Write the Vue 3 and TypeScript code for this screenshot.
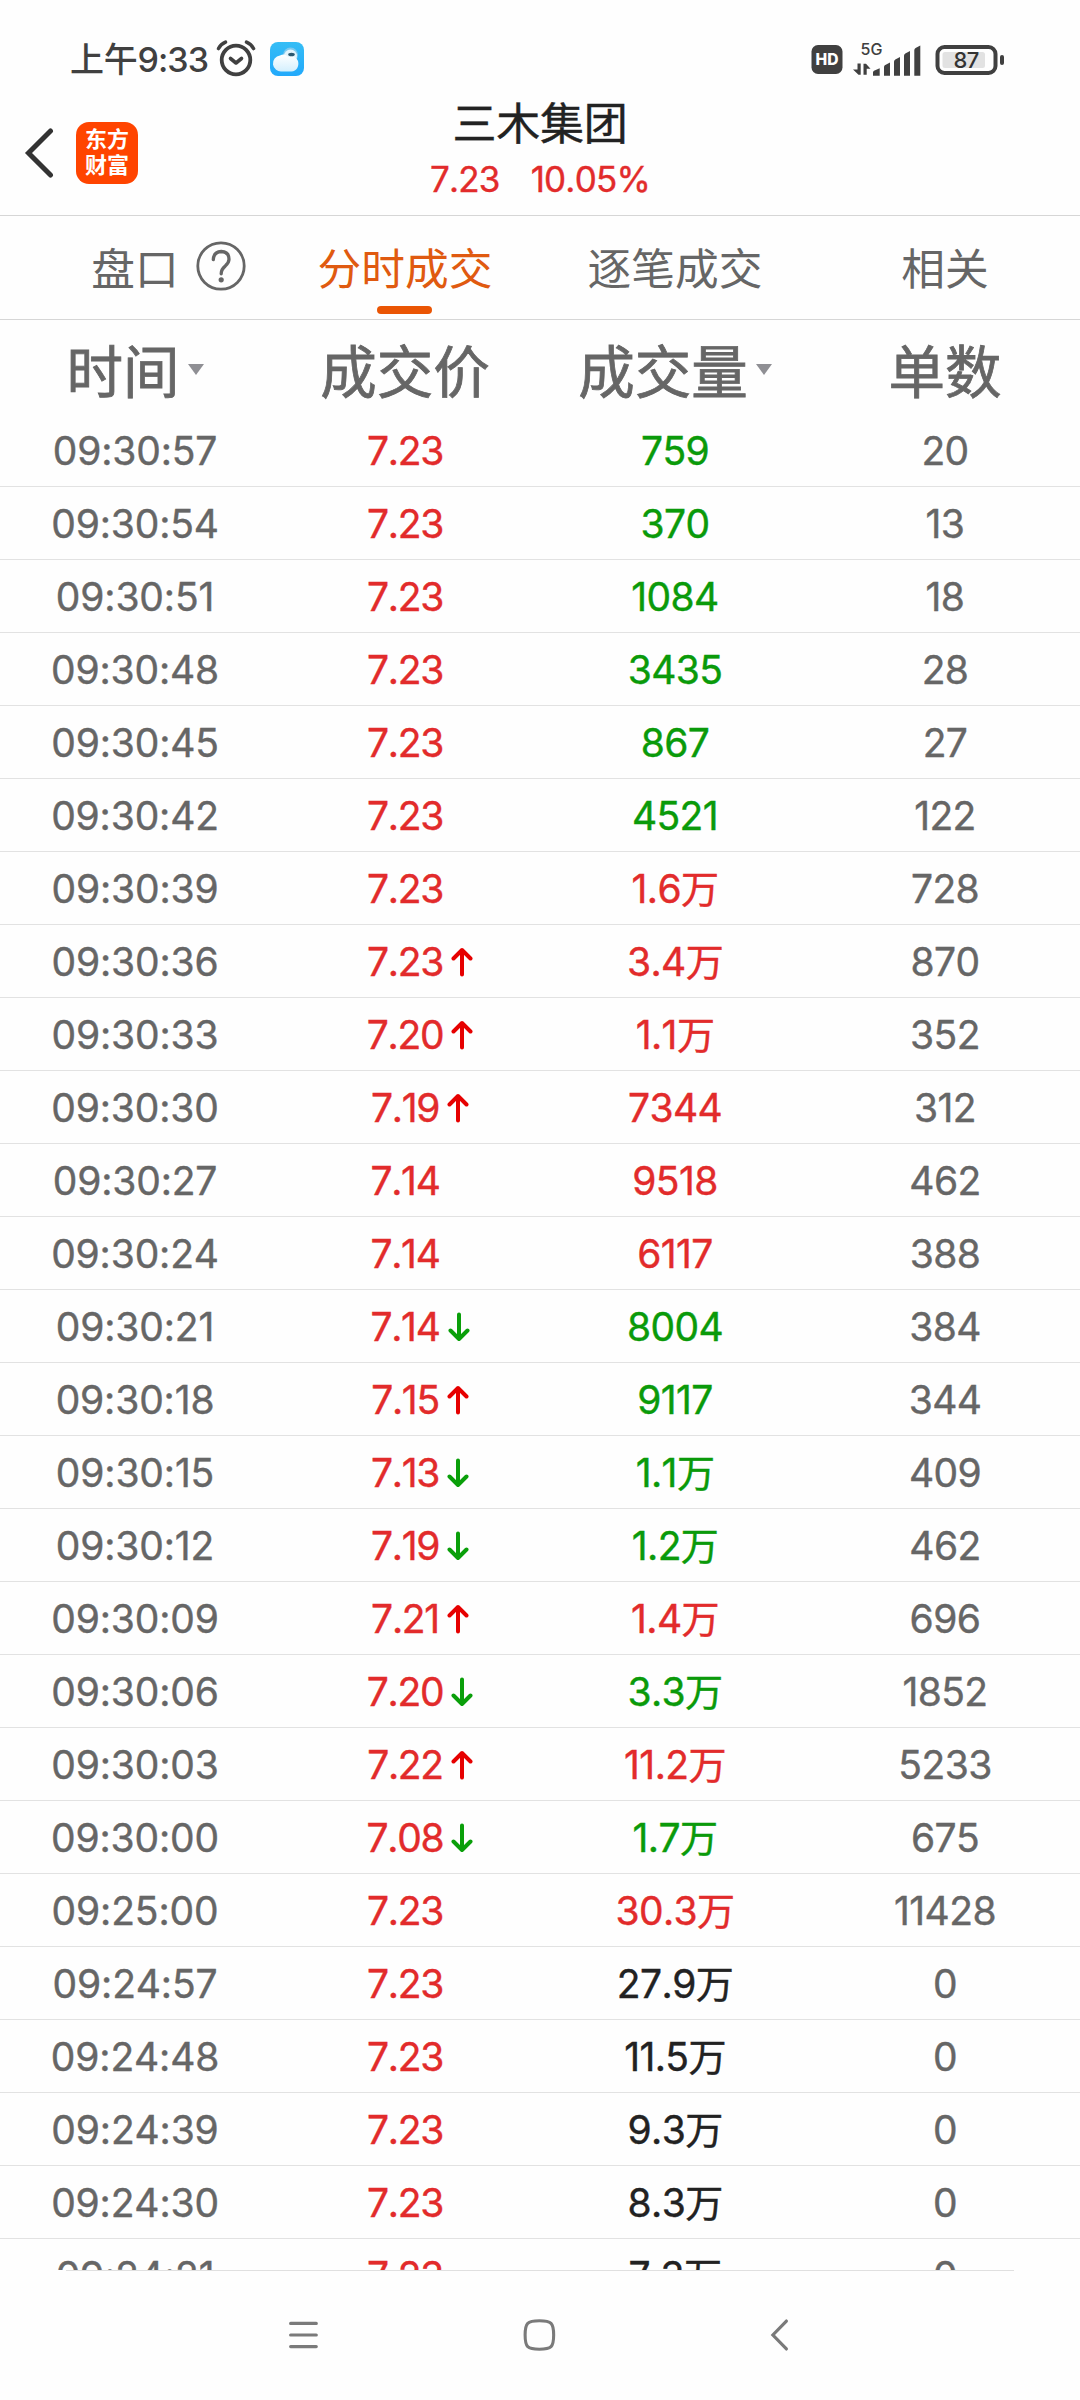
<script setup lang="ts">
type Tone = 'red' | 'green' | 'black'
type Trend = 'up' | 'down' | ''

interface Trade {
  time: string
  price: string
  trend: Trend
  volume: string
  unit: string
  tone: Tone
  orders: string
}

const t = (time: string, price: string, trend: Trend, volume: string, tone: Tone, orders: string): Trade => ({
  time,
  price,
  trend,
  volume: volume.replace('万', ''),
  unit: volume.endsWith('万') ? '万' : '',
  tone,
  orders,
})

const trades: Trade[] = [
  t('09:30:57', '7.23', '', '759', 'green', '20'),
  t('09:30:54', '7.23', '', '370', 'green', '13'),
  t('09:30:51', '7.23', '', '1084', 'green', '18'),
  t('09:30:48', '7.23', '', '3435', 'green', '28'),
  t('09:30:45', '7.23', '', '867', 'green', '27'),
  t('09:30:42', '7.23', '', '4521', 'green', '122'),
  t('09:30:39', '7.23', '', '1.6万', 'red', '728'),
  t('09:30:36', '7.23', 'up', '3.4万', 'red', '870'),
  t('09:30:33', '7.20', 'up', '1.1万', 'red', '352'),
  t('09:30:30', '7.19', 'up', '7344', 'red', '312'),
  t('09:30:27', '7.14', '', '9518', 'red', '462'),
  t('09:30:24', '7.14', '', '6117', 'red', '388'),
  t('09:30:21', '7.14', 'down', '8004', 'green', '384'),
  t('09:30:18', '7.15', 'up', '9117', 'green', '344'),
  t('09:30:15', '7.13', 'down', '1.1万', 'green', '409'),
  t('09:30:12', '7.19', 'down', '1.2万', 'green', '462'),
  t('09:30:09', '7.21', 'up', '1.4万', 'red', '696'),
  t('09:30:06', '7.20', 'down', '3.3万', 'green', '1852'),
  t('09:30:03', '7.22', 'up', '11.2万', 'red', '5233'),
  t('09:30:00', '7.08', 'down', '1.7万', 'green', '675'),
  t('09:25:00', '7.23', '', '30.3万', 'red', '11428'),
  t('09:24:57', '7.23', '', '27.9万', 'black', '0'),
  t('09:24:48', '7.23', '', '11.5万', 'black', '0'),
  t('09:24:39', '7.23', '', '9.3万', 'black', '0'),
  t('09:24:30', '7.23', '', '8.3万', 'black', '0'),
  t('09:24:21', '7.23', '', '7.3万', 'black', '0'),
]

const columns = [
  { label: '时间', sortable: true },
  { label: '成交价', sortable: false },
  { label: '成交量', sortable: true },
  { label: '单数', sortable: false },
]
</script>

<template>
  <div class="screen">
    <div class="status">
      <div class="status-left">
        <span class="clock"><span class="clock-cn">上午</span>9:33</span>
        <svg class="alarm" width="42" height="38" viewBox="0 0 42 38" fill="none" stroke="#404040" stroke-linecap="round">
          <circle cx="21" cy="21" r="14.3" stroke-width="3.8" />
          <path d="M15.5 19.5l5.500 4.500 5.500-4.500" stroke-width="3.6" stroke-linejoin="round" />
          <path d="M3.500 9.500q2.500-4.500 7-6.300M38.500 9.500q-2.500-4.500-7-6.300" stroke-width="3.600" />
        </svg>
        <svg class="weather" width="34" height="34" viewBox="0 0 34 34">
          <defs>
            <linearGradient id="sky" x1="0" y1="0" x2="0" y2="1">
              <stop offset="0" stop-color="#35bdf5" />
              <stop offset="1" stop-color="#22a9fb" />
            </linearGradient>
            <linearGradient id="cloud" x1="0" y1="0" x2="0" y2="1">
              <stop offset="0" stop-color="#ffffff" />
              <stop offset="1" stop-color="#d3effd" />
            </linearGradient>
          </defs>
          <rect width="34" height="34" rx="8" fill="url(#sky)" />
          <circle cx="20.500" cy="13" r="7.500" fill="#7cc9ee" />
          <circle cx="20.500" cy="14" r="6.500" fill="#e2f4fc" />
          <path d="M12 29.500a8 8 0 0 1-2-16 7 7 0 0 1 8.500 1.500 7 7 0 0 1 9.500 4c1.500 5-1.500 10.500-6.500 10.500z" fill="url(#cloud)" />
          <ellipse cx="21.500" cy="12.500" rx="3.300" ry="1.800" fill="#2b5870" />
        </svg>
      </div>
      <svg class="status-right" width="194" height="40" viewBox="0 -4 194 40">
        <rect x="0.500" y="4" width="31" height="29" rx="6.500" fill="#404040" />
        <text x="16" y="23.800" text-anchor="middle" class="hd" textLength="23" lengthAdjust="spacingAndGlyphs">HD</text>
        <text x="60.500" y="13.500" text-anchor="middle" class="net">5G</text>
        <g fill="#404040">
          <path d="M46.500 22.500h3.200v11.200h-2.200l-5.500-5.200h4.500zM52.500 33.700h3.200v-6h3.800l-4.500-5h-2.500z" />
          <path d="M62 34.700v-3.500q0-1 1-1.500l5.700-2.500v7.500zM73 34.700v-8.700q0-1.500 1.300-2l4.700-2.500v13.200zM83 34.700v-14q0-1.500 1.300-2.200l4.700-2.500v18.700zM93 34.700v-20q0-1.500 1.300-2.200l4.700-2.500v24.700zM103.300 34.700v-25.500q0-1.500 1.300-2.200l4.700-2.500v30.200z" />
        </g>
        <rect x="126.500" y="6" width="58" height="26" rx="7" fill="none" stroke="#404040" stroke-width="4" />
        <rect x="131.500" y="11" width="42.500" height="16" rx="2.500" fill="#e2e2e2" />
        <text x="155" y="27.300" text-anchor="middle" class="batt">87</text>
        <rect x="189" y="14" width="4" height="10" rx="2" fill="#404040" />
      </svg>
    </div>

    <header class="header">
      <div class="header-left">
        <svg width="30" height="52" viewBox="0 0 30 52" fill="none" stroke="#333" stroke-width="5" stroke-linecap="round" stroke-linejoin="miter">
          <path d="M26.500 4L4.500 26l22 22" />
        </svg>
        <div class="logo"><span>东方</span><span>财富</span></div>
      </div>
      <div class="header-mid">
        <h1>三木集团</h1>
        <div class="quote"><span>7.23</span><span>10.05%</span></div>
      </div>
      <div></div>
    </header>

    <nav class="tabs">
      <div class="tab">
        <span class="tab-text">盘口
          <svg class="help" width="50" height="50" viewBox="0 0 50 50" fill="none" stroke="#666">
            <circle cx="25" cy="25" r="23.200" stroke-width="2.800" />
            <path d="M17.300 18.700q0.500-8 7.900-8.200 7.800 0.300 7.800 7.800 0 3.500-3.800 6.800-4 3.200-4 7.700" stroke-width="3.300" stroke-linecap="round" />
            <circle cx="25.200" cy="38.800" r="2.600" fill="#666" stroke="none" />
          </svg>
        </span>
      </div>
      <div class="tab active"><span class="tab-text">分时成交</span></div>
      <div class="tab"><span class="tab-text">逐笔成交</span></div>
      <div class="tab"><span class="tab-text">相关</span></div>
    </nav>

    <div class="cols">
      <div v-for="c in columns" :key="c.label" class="col">
        <span>{{ c.label }}</span>
        <i v-if="c.sortable" class="caret"></i>
      </div>
    </div>

    <main class="list">
      <div v-for="r in trades" :key="r.time" class="row">
        <div class="cell time">{{ r.time }}</div>
        <div class="cell red">
          <span class="price">{{ r.price }}
            <svg v-if="r.trend" class="arrow" :class="r.trend" width="22" height="30" viewBox="0 0 22 30" fill="none" stroke-width="4" stroke-linecap="round" stroke-linejoin="round">
              <path d="M11 27.500V3M2.500 11.500L11 3l8.500 8.500" />
            </svg>
          </span>
        </div>
        <div class="cell" :class="r.tone">{{ r.volume }}<span v-if="r.unit" class="unit">{{ r.unit }}</span></div>
        <div class="cell orders">{{ r.orders }}</div>
      </div>
    </main>

    <footer class="sysnav">
      <svg width="30" height="32" viewBox="0 0 30 32" stroke="#7a7a7a" stroke-width="3.300" stroke-linecap="round">
        <path d="M1.700 4h26.600M1.700 16h26.600M1.700 28h26.600" />
      </svg>
      <svg class="home" width="34" height="34" viewBox="0 0 34 34" fill="none" stroke="#7a7a7a" stroke-width="3.200">
        <path d="M17 2.200c12.500 0 14.800 2.300 14.800 14.800S29.500 31.800 17 31.800 2.200 29.500 2.200 17 4.500 2.200 17 2.200z" />
      </svg>
      <svg width="20" height="34" viewBox="0 0 20 34" fill="none" stroke="#7a7a7a" stroke-width="3.300" stroke-linecap="round">
        <path d="M17 2.500L3 17l14 14.500" />
      </svg>
    </footer>
  </div>
</template>

<style>
body {
  background: #fff;
}
</style>

<style scoped>
.screen {
  width: 1080px;
  height: 2400px;
  display: flex;
  flex-direction: column;
  overflow: hidden;
  background: #fefefe;
  font-family: Inter, 'Noto Sans CJK SC', sans-serif;
  font-kerning: none;
  color: #666;
}
.status {
  box-sizing: border-box;
  flex: none;
  height: 84px;
  padding: 34px 75px 0 70px;
  display: flex;
  align-items: center;
  justify-content: space-between;
}
.status-left {
  display: flex;
  align-items: center;
  color: #404040;
}
.clock {
  width: 139px;
  padding-top: 1px;
  font-size: 34px;
  line-height: 48px;
  font-weight: 500;
  letter-spacing: -0.900px;
  white-space: nowrap;
}
.clock-cn {
  font-size: 34px;
  letter-spacing: -0.300px;
}
.alarm {
  margin-left: 6px;
  margin-top: -2px;
}
.weather {
  margin-left: 13px;
}
.status-right {
  margin-top: -4px;
}
.hd {
  font: 800 16px Inter, sans-serif;
  fill: #fff;
}
.net {
  font: 500 16px Inter, sans-serif;
  fill: #404040;
}
.batt {
  font: 500 22px Inter, sans-serif;
  fill: #333;
  letter-spacing: -0.600px;
}
.header {
  box-sizing: border-box;
  flex: none;
  height: 132px;
  border-bottom: 1px solid #d6d6d6;
  display: grid;
  grid-template-columns: 1fr auto 1fr;
}
.header-left {
  display: flex;
  align-items: center;
  gap: 22px;
  height: 137px;
  padding-left: 24px;
}
.logo {
  box-sizing: border-box;
  width: 62px;
  height: 62px;
  padding-bottom: 2px;
  border-radius: 13px;
  background: #ff4400;
  color: #fff;
  display: flex;
  flex-direction: column;
  align-items: center;
  justify-content: center;
  font-size: 22px;
  font-weight: 700;
  line-height: 26px;
}
.header-mid {
  display: flex;
  flex-direction: column;
  align-items: center;
  padding-top: 9px;
}
h1 {
  margin: 0;
  font-size: 44px;
  line-height: 63px;
  font-weight: 400;
  color: #222;
  letter-spacing: -0.300px;
  -webkit-text-stroke: 0.400px #222;
}
.quote {
  display: flex;
  gap: 31px;
  padding-top: 1px;
  font-size: 35px;
  line-height: 45px;
  color: #e22b2b;
  letter-spacing: -0.800px;
  -webkit-text-stroke: 0.400px currentColor;
}
.tabs {
  box-sizing: border-box;
  flex: none;
  height: 104px;
  border-bottom: 1px solid #d6d6d6;
  display: grid;
  grid-template-columns: repeat(4, 1fr);
}
.tab {
  position: relative;
  display: flex;
  align-items: center;
  justify-content: center;
  padding-bottom: 3px;
  font-size: 43.700px;
}
.tab-text {
  position: relative;
  white-space: nowrap;
}
.help {
  position: absolute;
  left: 104.500px;
  top: 7px;
}
.active {
  color: #e05a10;
}
.active::after {
  content: '';
  position: absolute;
  left: 50%;
  bottom: 5px;
  width: 55px;
  height: 8px;
  margin-left: -28px;
  border-radius: 4px;
  background: #ea5504;
}
.cols {
  flex: none;
  height: 94px;
  display: grid;
  grid-template-columns: repeat(4, 1fr);
}
.col {
  display: flex;
  align-items: center;
  justify-content: center;
  gap: 8px;
  padding-top: 12px;
  font-size: 56.500px;
  line-height: 82px;
  -webkit-text-stroke: 0.800px #666;
}
.caret {
  border: 8.500px solid transparent;
  border-top: 11px solid #8f8f94;
  border-bottom: 0;
  margin-top: -8px;
}
.list {
  flex: none;
  height: 1856px;
  overflow: hidden;
}
.row {
  box-sizing: border-box;
  height: 73px;
  border-bottom: 1px solid #e2e2e2;
  display: grid;
  grid-template-columns: repeat(4, 1fr);
}
.cell {
  height: 72px;
  box-sizing: border-box;
  padding-top: 2px;
  display: flex;
  align-items: center;
  justify-content: center;
  font-size: 39px;
  line-height: 70px;
  letter-spacing: -0.600px;
  -webkit-text-stroke: 0.400px currentColor;
}
.time {
  letter-spacing: -0.150px;
}
.price {
  position: relative;
  letter-spacing: -1.300px;
}
.arrow {
  position: absolute;
  left: calc(100% + 8px);
  top: 20px;
}
.up {
  stroke: #e60000;
}
.down {
  stroke: #0a9f0a;
  transform: rotate(180deg);
}
.unit {
  font-size: 38px;
}
.red {
  color: #e22b2b;
}
.green {
  color: #0a9a0a;
}
.black {
  color: #222;
}
.sysnav {
  position: relative;
  flex: 1;
  display: flex;
  align-items: center;
  padding: 0 291px 0 289px;
}
.home {
  margin: 0 214px 0 205px;
}
.sysnav::before {
  content: '';
  position: absolute;
  left: 66px;
  right: 66px;
  top: 0;
  height: 1px;
  background: #e0e0e0;
}
</style>
